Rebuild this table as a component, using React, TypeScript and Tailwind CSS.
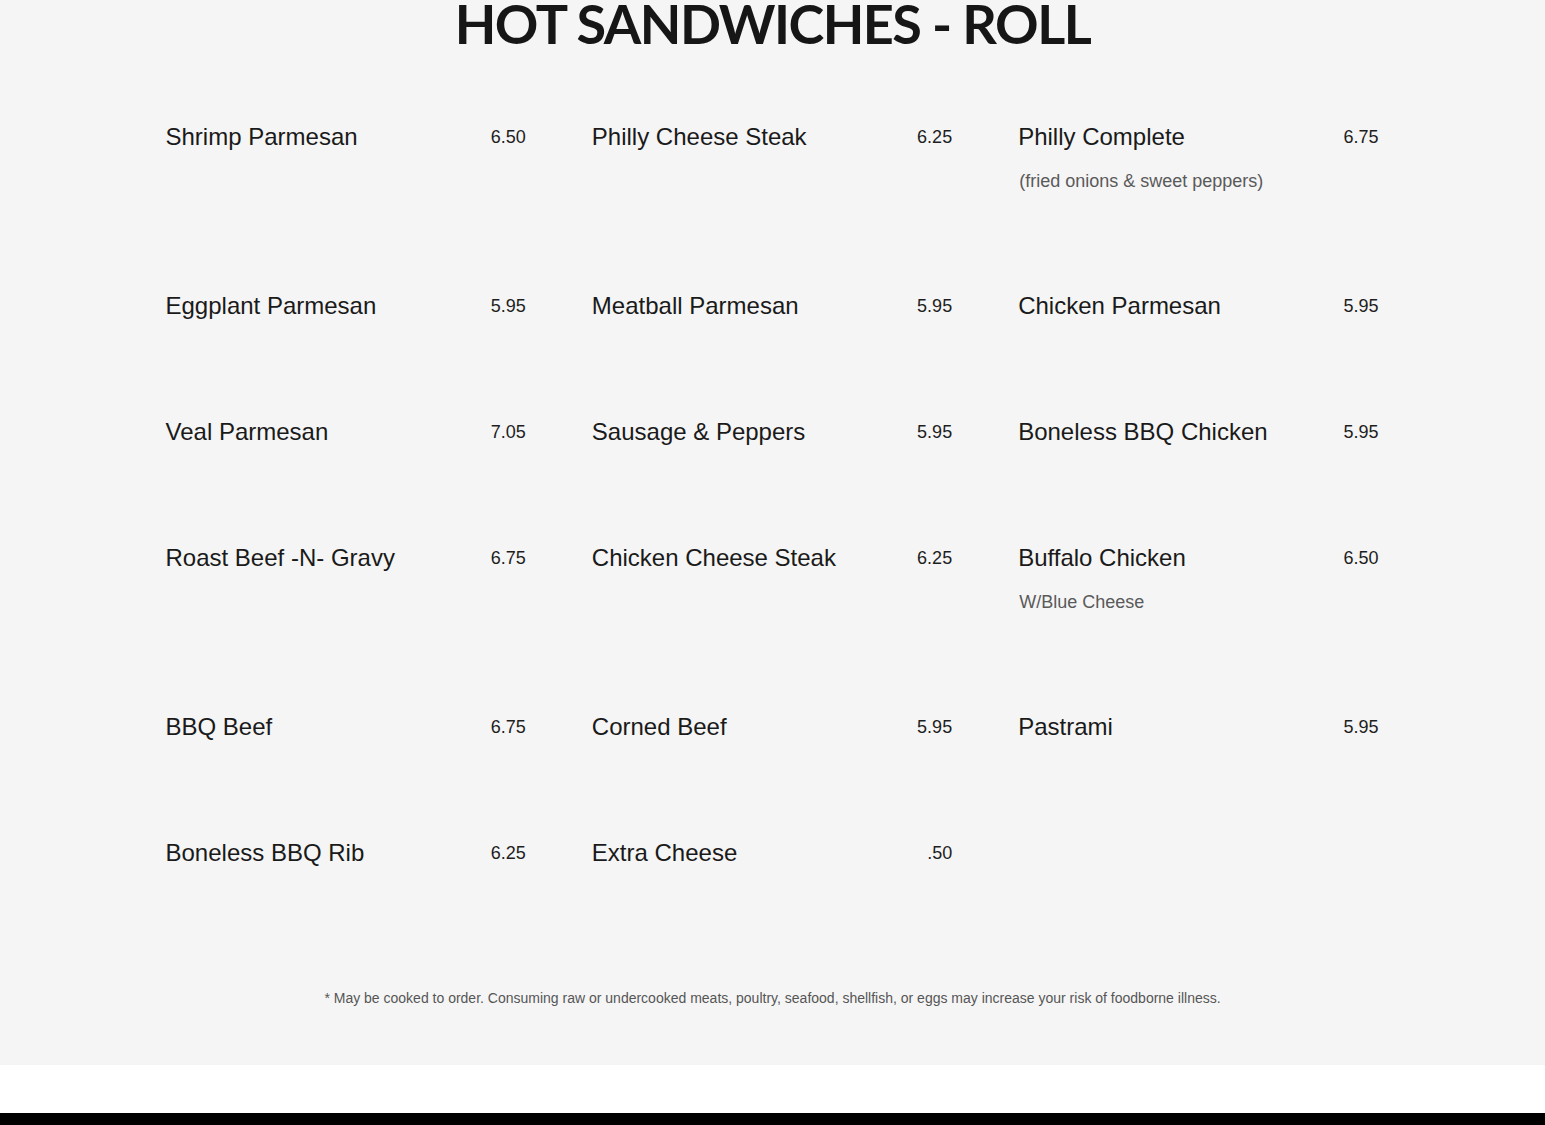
import React from 'react';

interface MenuItem {
  name: string;
  price: string;
  note?: string;
}

const items: (MenuItem | null)[] = [
  { name: 'Shrimp Parmesan', price: '6.50' },
  { name: 'Philly Cheese Steak', price: '6.25' },
  { name: 'Philly Complete', price: '6.75', note: '(fried onions & sweet peppers)' },
  { name: 'Eggplant Parmesan', price: '5.95' },
  { name: 'Meatball Parmesan', price: '5.95' },
  { name: 'Chicken Parmesan', price: '5.95' },
  { name: 'Veal Parmesan', price: '7.05' },
  { name: 'Sausage & Peppers', price: '5.95' },
  { name: 'Boneless BBQ Chicken', price: '5.95' },
  { name: 'Roast Beef -N- Gravy', price: '6.75' },
  { name: 'Chicken Cheese Steak', price: '6.25' },
  { name: 'Buffalo Chicken', price: '6.50', note: 'W/Blue Cheese' },
  { name: 'BBQ Beef', price: '6.75' },
  { name: 'Corned Beef', price: '5.95' },
  { name: 'Pastrami', price: '5.95' },
  { name: 'Boneless BBQ Rib', price: '6.25' },
  { name: 'Extra Cheese', price: '.50' },
  null,
];

const sans = "font-['Liberation_Sans',Arial,sans-serif]";

const MenuEntry: React.FC<{ item: MenuItem }> = ({ item }) => (
  <div>
    <div className="flex items-center justify-between h-[30px]">
      <span className="-ml-px text-[24px] leading-[30px] text-[#1a1a1a]">{item.name}</span>
      <span className="text-[18px] leading-[30px] text-[#1e1e1e]">{item.price}</span>
    </div>
    {item.note && (
      <p className="mt-[15px] text-[18px] leading-[28px] text-[#5a5a5a]">{item.note}</p>
    )}
  </div>
);

export default function App() {
  return (
    <div className={`min-h-screen bg-white ${sans}`}>
      <section className="bg-[#f5f5f5] overflow-hidden">
        {/* Section title */}
        <h1 className="text-center font-['Lato',sans-serif] font-bold text-[54px] leading-[48px] tracking-[-1.5px] uppercase text-[#161616]">
          Hot Sandwiches - Roll
        </h1>

        {/* Items */}
        <div className="w-[1212px] mx-auto mt-[74px] grid grid-cols-3 gap-x-[67px] gap-y-[96px]">
          {items.map((item, i) => (item ? <MenuEntry key={i} item={item} /> : <div key={i} />))}
        </div>

        {/* Disclaimer */}
        <p className="mt-[122px] pb-[59px] text-center font-['Liberation_Sans_Narrow','Liberation_Sans',sans-serif] text-[14px] leading-[16px] text-[#555]">
          * May be cooked to order. Consuming raw or undercooked meats, poultry, seafood, shellfish, or eggs may increase your risk of foodborne illness.
        </p>
      </section>

      <div className="h-[48px] bg-white" />
      <div className="h-[60px] bg-black" />
    </div>
  );
}
